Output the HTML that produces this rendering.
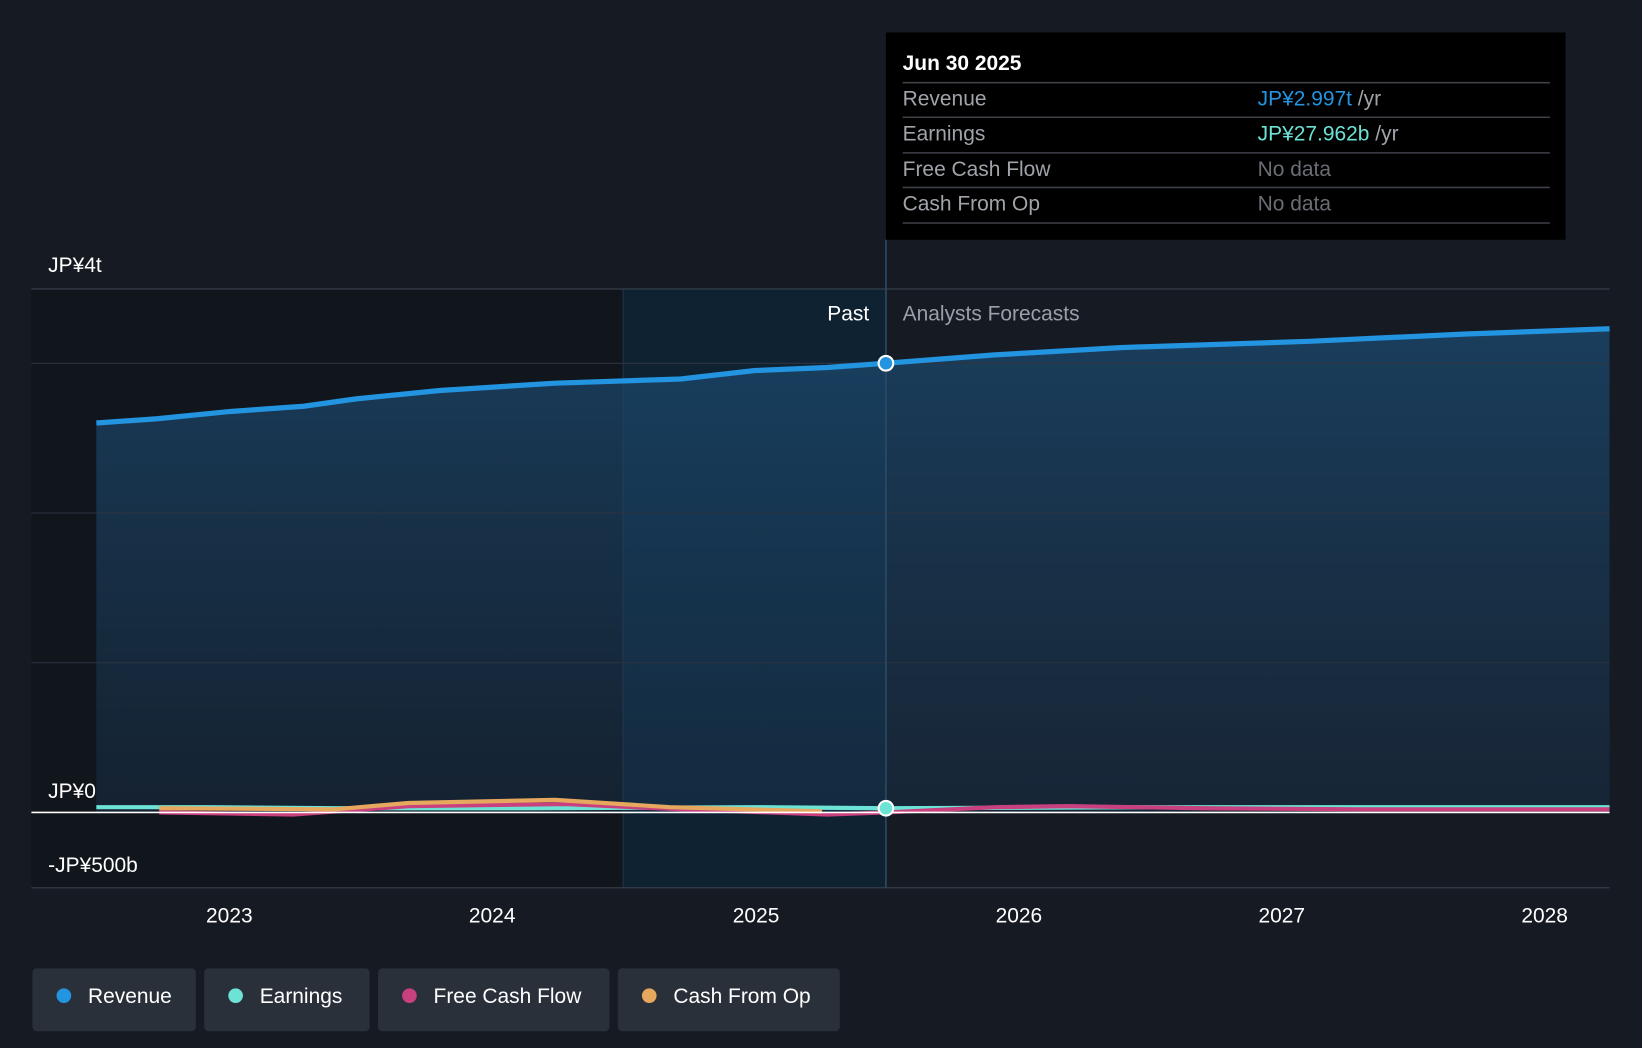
<!DOCTYPE html>
<html><head><meta charset="utf-8"><style>
html,body{margin:0;padding:0;background:#151a23;width:1642px;height:1048px;overflow:hidden}
svg{display:block}
text{font-family:"Liberation Sans",sans-serif}
</style></head><body>
<svg width="1642" height="1048" viewBox="0 0 1568 1001" preserveAspectRatio="none" xmlns="http://www.w3.org/2000/svg">
<defs>
<linearGradient id="g" x1="0" y1="0" x2="0" y2="1">
<stop offset="0" stop-color="#1b4a70" stop-opacity="0.75"/>
<stop offset="1" stop-color="#1b3a58" stop-opacity="0.35"/>
</linearGradient>
</defs>
<rect width="1568" height="1001" fill="#151a23"/>
<rect x="30" y="276" width="565" height="572" fill="#11151c"/>
<rect x="595" y="276" width="251" height="572" fill="#0f2232"/>
<line x1="595" y1="276" x2="595" y2="848" stroke="#243447" stroke-width="1"/>
<path d="M92,404 L150,400 L220,393 L290,388 L340,381 L420,373 L530,366 L650,362 L720,354 L790,351 L846,347 L950,339 L1070,332 L1250,326 L1400,319 L1537,314 L1537,776 L92,776 Z" fill="url(#g)"/>
<g stroke="#2c3440" stroke-width="1">
<line x1="30" y1="276" x2="1537" y2="276" stroke="#3a424d"/>
<line x1="30" y1="347" x2="1537" y2="347"/>
<line x1="30" y1="490" x2="1537" y2="490"/>
<line x1="30" y1="633" x2="1537" y2="633"/>
<line x1="30" y1="848" x2="1537" y2="848" stroke="#3a424d"/>
</g>
<line x1="846" y1="229" x2="846" y2="848" stroke="#2d4a66" stroke-width="1.5"/>
<path d="M92,404 L150,400 L220,393 L290,388 L340,381 L420,373 L530,366 L650,362 L720,354 L790,351 L846,347 L950,339 L1070,332 L1250,326 L1400,319 L1537,314" fill="none" stroke="#2394e0" stroke-width="5"/>
<path d="M92,771 L200,771 L320,772 L500,772 L720,771 L846,772 L1100,771 L1537,771" fill="none" stroke="#6ce3d5" stroke-width="4"/>
<path d="M152,776 L280,778 L390,770 L540,768 L650,773 L790,778 L846,776 L950,771 L1020,770 L1150,772 L1300,773 L1537,773" fill="none" stroke="#c8407e" stroke-width="4"/>
<path d="M152,772 L320,773 L390,767 L530,764 L640,771 L785,775" fill="none" stroke="#e6a75e" stroke-width="4"/>
<line x1="30" y1="776" x2="1537" y2="776" stroke="#ffffff" stroke-width="1.5"/>
<circle cx="846" cy="347" r="7" fill="#2394e0" stroke="#fff" stroke-width="2"/>
<circle cx="846" cy="772" r="7" fill="#6ce3d5" stroke="#fff" stroke-width="2"/>
<g fill="#fff" font-size="20">
<text x="46" y="260">JP¥4t</text>
<text x="46" y="762">JP¥0</text>
<text x="46" y="833">-JP¥500b</text>
<text x="830" y="306" text-anchor="end">Past</text>
<text x="862" y="306" fill="#9aa0a8">Analysts Forecasts</text>
</g>
<g fill="#fff" font-size="20" text-anchor="middle">
<text x="219" y="881">2023</text><text x="470" y="881">2024</text><text x="722" y="881">2025</text>
<text x="973" y="881">2026</text><text x="1224" y="881">2027</text><text x="1475" y="881">2028</text>
</g>
<rect x="846" y="31" width="649" height="198" fill="#000"/>
<g stroke="#3d4148" stroke-width="1.5">
<line x1="862" y1="79" x2="1480" y2="79"/><line x1="862" y1="112" x2="1480" y2="112"/>
<line x1="862" y1="146" x2="1480" y2="146"/><line x1="862" y1="179" x2="1480" y2="179"/>
<line x1="862" y1="213" x2="1480" y2="213"/>
</g>
<g font-size="20">
<text x="862" y="67" fill="#fff" font-weight="bold">Jun 30 2025</text>
<text x="862" y="101" fill="#a0a4aa">Revenue</text>
<text x="1201" y="101" fill="#2394e0">JP¥2.997t <tspan fill="#a0a4aa">/yr</tspan></text>
<text x="862" y="134" fill="#a0a4aa">Earnings</text>
<text x="1201" y="134" fill="#6ce3d5">JP¥27.962b <tspan fill="#a0a4aa">/yr</tspan></text>
<text x="862" y="168" fill="#a0a4aa">Free Cash Flow</text>
<text x="1201" y="168" fill="#6a6e74">No data</text>
<text x="862" y="201" fill="#a0a4aa">Cash From Op</text>
<text x="1201" y="201" fill="#6a6e74">No data</text>
</g>
<g font-size="20" fill="#fff">
<rect x="31" y="925" width="156" height="60" rx="4" fill="#2a303a"/>
<circle cx="61" cy="951" r="7" fill="#2394e0"/><text x="84" y="958">Revenue</text>
<rect x="195" y="925" width="158" height="60" rx="4" fill="#2a303a"/>
<circle cx="225" cy="951" r="7" fill="#6ce3d5"/><text x="248" y="958">Earnings</text>
<rect x="361" y="925" width="221" height="60" rx="4" fill="#2a303a"/>
<circle cx="391" cy="951" r="7" fill="#c8407e"/><text x="414" y="958">Free Cash Flow</text>
<rect x="590" y="925" width="212" height="60" rx="4" fill="#2a303a"/>
<circle cx="620" cy="951" r="7" fill="#e6a75e"/><text x="643" y="958">Cash From Op</text>
</g>
</svg>
</body></html>
